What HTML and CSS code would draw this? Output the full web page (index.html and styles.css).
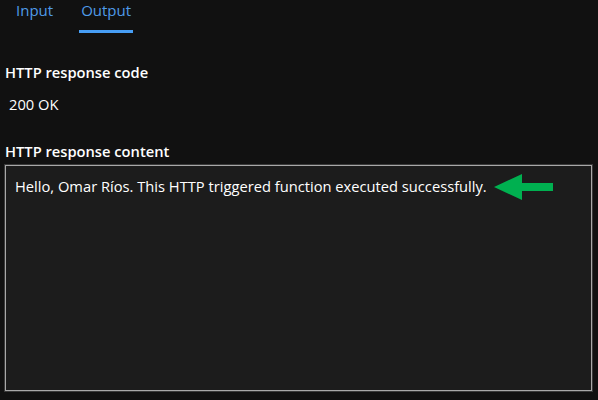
FILE: index.html
```html
<!DOCTYPE html>
<html>
<head>
<meta charset="utf-8">
<link rel="stylesheet" href="styles.css">
</head>
<body>
<div class="tabs">
  <div class="tab">Input</div>
  <div class="tab active">Output</div>
</div>
<div class="section">
  <div class="label">HTTP response code</div>
  <div class="value">200 OK</div>
</div>
<div class="section content">
  <div class="label">HTTP response content</div>
  <div class="box">
    <span class="msg">Hello, Omar Ríos. This HTTP triggered function executed successfully.</span>
    <svg class="arrow" width="60" height="28" viewBox="0 0 60 28"><polygon points="0,14 28,1 28,10 59,10 59,18 28,18 28,27" fill="#00b050"/></svg>
  </div>
</div>
</body>
</html>
```
FILE: styles.css
```css
html, body {
  margin: 0;
  padding: 0;
  background: #111111;
  color: #ffffff;
  font-family: "Open Sans", "Noto Sans", sans-serif;
  font-size: 14.7px;
  width: 598px;
  height: 400px;
  overflow: hidden;
}
.tabs {
  display: flex;
  gap: 24px;
  padding-left: 14px;
  height: 34px;
}
.tab {
  color: #4f9be8;
  font-size: 15px;
  line-height: 20px;
  padding: 0 2px;
  height: 31px;
  box-sizing: border-box;
}
.tab.active {
  border-bottom: 3px solid #479ef5;
  height: 33px;
}
.section {
  padding-left: 5px;
  padding-right: 6px;
}
.label {
  font-weight: 600;
  line-height: 20px;
  margin-top: 28px;
}
.value {
  padding-left: 4px;
  line-height: 20px;
  margin-top: 12px;
}
.content .label {
  margin-top: 27px;
}
.box {
  margin-top: 4px;
  height: 226px;
  background: #1c1c1c;
  border: 1px solid #a8a8a8;
  box-shadow: 0 0 0 1px #3a3a3a;
  display: flex;
  align-items: flex-start;
  padding: 10px 9px;
  box-sizing: border-box;
}
.msg {
  line-height: 20px;
}
.arrow {
  margin-left: 7px;
  margin-top: -3px;
}
```
